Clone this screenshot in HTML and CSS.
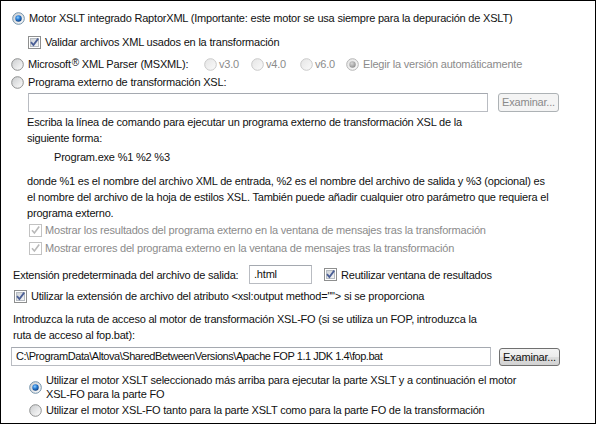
FILE: index.html
```html
<!DOCTYPE html>
<html lang="es">
<head>
<meta charset="utf-8">
<title>Opciones XSL</title>
<link rel="stylesheet" href="styles.css">
</head>
<body>
<svg class="defs" width="0" height="0" aria-hidden="true">
  <defs>
    <linearGradient id="rbFill" x1="0" y1="0" x2="1" y2="1">
      <stop offset="0" stop-color="#c9cbcd"/>
      <stop offset="1" stop-color="#ffffff"/>
    </linearGradient>
    <linearGradient id="rbFillDis" x1="0" y1="0" x2="1" y2="1">
      <stop offset="0" stop-color="#e4e4e4"/>
      <stop offset="1" stop-color="#fbfbfb"/>
    </linearGradient>
    <radialGradient id="rbDot" cx="0.4" cy="0.35" r="0.7">
      <stop offset="0" stop-color="#8fd0ff"/>
      <stop offset="0.45" stop-color="#2c7fd6"/>
      <stop offset="1" stop-color="#0b3a7a"/>
    </radialGradient>
    <radialGradient id="rbDotDis" cx="0.4" cy="0.35" r="0.7">
      <stop offset="0" stop-color="#d8d8d8"/>
      <stop offset="1" stop-color="#8c8c8c"/>
    </radialGradient>
    <linearGradient id="cbFill" x1="0" y1="0" x2="1" y2="1">
      <stop offset="0" stop-color="#cdd1d6"/>
      <stop offset="1" stop-color="#f7f7f7"/>
    </linearGradient>
  </defs>
</svg>

<div class="panel">
  <div class="row r1">
    <svg class="rb" viewBox="0 0 13 13"><circle cx="6.5" cy="6.5" r="5.8" fill="url(#rbFill)" stroke="#6f8fa8"/><circle cx="6.5" cy="6.5" r="3.2" fill="url(#rbDot)"/></svg>
    <span>Motor XSLT integrado RaptorXML (Importante: este motor se usa siempre para la depuración de XSLT)</span>
  </div>

  <div class="row r2">
    <svg class="cb" viewBox="0 0 13 13"><rect x="0.5" y="0.5" width="12" height="12" fill="#fff" stroke="#8e8f8f"/><rect x="2.5" y="2.5" width="8" height="8" fill="url(#cbFill)" stroke="#b6bbc1"/><path d="M3 6.2 L5.4 9 L10.2 2.6" fill="none" stroke="#4b5f96" stroke-width="1.8"/></svg>
    <span>Validar archivos XML usados en la transformación</span>
  </div>

  <div class="row r3">
    <svg class="rb" viewBox="0 0 13 13"><circle cx="6.5" cy="6.5" r="5.8" fill="url(#rbFill)" stroke="#8e8f8f"/></svg>
    <span class="ms">Microsoft<sup>®</sup> XML Parser (MSXML):</span>
    <span class="opt dis o1"><svg class="rb" viewBox="0 0 13 13"><circle cx="6.5" cy="6.5" r="5.8" fill="url(#rbFillDis)" stroke="#c9c9c9"/></svg>v3.0</span>
    <span class="opt dis o2"><svg class="rb" viewBox="0 0 13 13"><circle cx="6.5" cy="6.5" r="5.8" fill="url(#rbFillDis)" stroke="#c9c9c9"/></svg>v4.0</span>
    <span class="opt dis o3"><svg class="rb" viewBox="0 0 13 13"><circle cx="6.5" cy="6.5" r="5.8" fill="url(#rbFillDis)" stroke="#c9c9c9"/></svg>v6.0</span>
    <span class="opt dis o4"><svg class="rb" viewBox="0 0 13 13"><circle cx="6.5" cy="6.5" r="5.8" fill="url(#rbFillDis)" stroke="#b5b5b5"/><circle cx="6.5" cy="6.5" r="3.2" fill="url(#rbDotDis)"/></svg>Elegir la versión automáticamente</span>
  </div>

  <div class="row r4">
    <svg class="rb" viewBox="0 0 13 13"><circle cx="6.5" cy="6.5" r="5.8" fill="url(#rbFill)" stroke="#8e8f8f"/></svg>
    <span>Programa externo de transformación XSL:</span>
  </div>

  <div class="fieldrow ext-cmd">
    <div class="input cmd"></div>
    <div class="btn disabled">Examinar...</div>
  </div>

  <p class="text t-escriba">Escriba la línea de comando para ejecutar un programa externo de transformación XSL de la<br>siguiente forma:</p>
  <p class="text t-code">Program.exe %1 %2 %3</p>
  <p class="text t-donde">donde %1 es el nombre del archivo XML de entrada, %2 es el nombre del archivo de salida y %3 (opcional) es<br>el nombre del archivo de la hoja de estilos XSL. También puede añadir cualquier otro parámetro que requiera el<br>programa externo.</p>

  <div class="row dis d1">
    <svg class="cb" viewBox="0 0 13 13"><rect x="0.5" y="0.5" width="12" height="12" fill="#fff" stroke="#c2c2c2"/><path d="M3 6.2 L5.4 9 L10.2 2.6" fill="none" stroke="#b9b9b9" stroke-width="1.6"/></svg>
    <span>Mostrar los resultados del programa externo en la ventana de mensajes tras la transformación</span>
  </div>
  <div class="row dis d2">
    <svg class="cb" viewBox="0 0 13 13"><rect x="0.5" y="0.5" width="12" height="12" fill="#fff" stroke="#c2c2c2"/><path d="M3 6.2 L5.4 9 L10.2 2.6" fill="none" stroke="#b9b9b9" stroke-width="1.6"/></svg>
    <span>Mostrar errores del programa externo en la ventana de mensajes tras la transformación</span>
  </div>

  <div class="row extrow">
    <span class="ext-label">Extensión predeterminada del archivo de salida:</span>
    <div class="input small">.html</div>
    <svg class="cb" viewBox="0 0 13 13"><rect x="0.5" y="0.5" width="12" height="12" fill="#fff" stroke="#8e8f8f"/><rect x="2.5" y="2.5" width="8" height="8" fill="url(#cbFill)" stroke="#b6bbc1"/><path d="M3 6.2 L5.4 9 L10.2 2.6" fill="none" stroke="#4b5f96" stroke-width="1.8"/></svg>
    <span>Reutilizar ventana de resultados</span>
  </div>

  <div class="row r-useext">
    <svg class="cb" viewBox="0 0 13 13"><rect x="0.5" y="0.5" width="12" height="12" fill="#fff" stroke="#8e8f8f"/><rect x="2.5" y="2.5" width="8" height="8" fill="url(#cbFill)" stroke="#b6bbc1"/><path d="M3 6.2 L5.4 9 L10.2 2.6" fill="none" stroke="#4b5f96" stroke-width="1.8"/></svg>
    <span>Utilizar la extensión de archivo del atributo &lt;xsl:output method=""&gt; si se proporciona</span>
  </div>

  <p class="text t-intro">Introduzca la ruta de acceso al motor de transformación XSL-FO (si se utiliza un FOP, introduzca la<br>ruta de acceso al fop.bat):</p>

  <div class="fieldrow fo-path">
    <div class="input path">C:\ProgramData\Altova\SharedBetweenVersions\Apache FOP 1.1 JDK 1.4\fop.bat</div>
    <div class="btn">Examinar...</div>
  </div>

  <div class="row fo1">
    <svg class="rb" viewBox="0 0 13 13"><circle cx="6.5" cy="6.5" r="5.8" fill="url(#rbFill)" stroke="#6f8fa8"/><circle cx="6.5" cy="6.5" r="3.2" fill="url(#rbDot)"/></svg>
    <span class="two">Utilizar el motor XSLT seleccionado más arriba para ejecutar la parte XSLT y a continuación el motor<br>XSL-FO para la parte FO</span>
  </div>
  <div class="row fo2">
    <svg class="rb" viewBox="0 0 13 13"><circle cx="6.5" cy="6.5" r="5.8" fill="url(#rbFill)" stroke="#8e8f8f"/></svg>
    <span>Utilizar el motor XSL-FO tanto para la parte XSLT como para la parte FO de la transformación</span>
  </div>
</div>
</body>
</html>
```

FILE: styles.css
```css
html, body {
  margin: 0;
  padding: 0;
  background: #ffffff;
}

.defs {
  position: absolute;
  width: 0;
  height: 0;
}

.panel {
  box-sizing: border-box;
  width: 596px;
  height: 424px;
  border: 1px solid #000;
  padding: 9px 0 0 10px;
  font-family: "Liberation Sans", Arial, sans-serif;
  font-size: 11px;
  letter-spacing: -0.2px;
  line-height: 16px;
  color: #111;
  overflow: hidden;
}

.row {
  display: flex;
  align-items: center;
  height: 16px;
  white-space: nowrap;
}

.rb, .cb {
  width: 13px;
  height: 13px;
  flex: none;
}

.rb { margin-right: 4px; }
.cb { margin-right: 4px; }

.r1 { margin-left: 1px; }
.r2 { margin-top: 8px; margin-left: 17px; }
.r3 { margin-top: 6px; }
.r4 { margin-top: 2px; }

.ms {
  width: 176px;
  flex: none;
}

.ms sup {
  font-size: 10px;
  line-height: 0;
  vertical-align: 2px;
  margin-left: 1px;
}

.opt {
  display: flex;
  align-items: center;
  flex: none;
}
.opt .rb { margin-right: 2px; }
.o1 { width: 47px; }
.o2 { width: 49px; }
.o3 { width: 46px; }
.o4 .rb { margin-right: 4px; }

.dis { color: #8b8b8b; }

.fieldrow {
  display: flex;
  align-items: center;
}

.ext-cmd {
  margin-top: 3px;
  margin-left: 17px;
}

.input {
  box-sizing: border-box;
  height: 19px;
  border: 1px solid #b9bcc2;
  border-top-color: #a5a9b0;
  background: #fff;
  padding: 0 4px;
  line-height: 17px;
  white-space: nowrap;
  overflow: hidden;
}

.input.cmd { width: 460px; }

.btn {
  box-sizing: border-box;
  height: 18px;
  width: 61px;
  border: 1px solid #707070;
  border-radius: 3px;
  background: linear-gradient(#f4f4f4, #ececec 50%, #dedede 50%, #d2d2d2);
  text-align: center;
  line-height: 16px;
  color: #111;
  margin-left: 10px;
}

.btn.disabled {
  border-color: #adb2b5;
  background: #f4f4f4;
  color: #8a8a8a;
  height: 19px;
}

.text {
  margin: 0;
  white-space: nowrap;
}

.t-escriba { margin: 2px 0 0 16px; }
.t-code { margin: 3px 0 0 43px; }
.t-donde { margin: 8px 0 0 16px; }

.d1 { margin-top: 1px; margin-left: 18px; }
.d2 { margin-top: 2px; margin-left: 18px; }
.d1 .cb, .d2 .cb { margin-right: 3px; }

.extrow {
  margin-top: 9px;
  height: 19px;
  margin-left: 2px;
}
.ext-label {
  width: 236px;
  flex: none;
}
.input.small {
  width: 63px;
  margin-right: 12px;
  flex: none;
}

.r-useext {
  margin-top: 4px;
  margin-left: 3px;
}

.t-intro { margin: 7px 0 0 2px; }

.fo-path { margin-top: 4px; }
.input.path {
  width: 480px;
  letter-spacing: -0.45px;
}
.fo-path .btn { margin-left: 8px; }

.fo1 {
  margin-top: 7px;
  margin-left: 18px;
  height: 28px;
}
.fo1 .two { line-height: 14px; }

.fo2 {
  margin-top: 1px;
  margin-left: 18px;
}
```
